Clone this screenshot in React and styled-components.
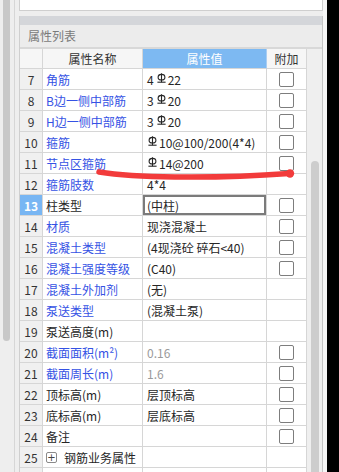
import React from "react";
import styled, { createGlobalStyle } from "styled-components";

const Global = createGlobalStyle`
  html, body { margin: 0; padding: 0; background: #eeeeee; }
  body { font-family: "Noto Sans CJK SC", "Noto Sans", sans-serif; }
`;

const Screen = styled.div`
  position: relative;
  width: 339px;
  height: 472px;
  overflow: hidden;
  display: flex;
  background: #eeeeee;
  font-family: "Noto Sans CJK SC", "Noto Sans", sans-serif;
  font-size: 12px;
`;

const LeftRail = styled.div`
  flex: none;
  border-right: 1px solid #d6d6d6;
  padding-left: 3px;
  width: 11px;
`;

const RailThumb = styled.div`
  width: 7px;
  height: 341px;
  background: #c8c8c8;
  border-radius: 0 0 4px 4px;
`;

const Main = styled.div`
  width: 304px;
  flex: none;
  padding-left: 4px;
  display: flex;
  flex-direction: column;
`;

const TopBox = styled.div`
  height: 11px;
  box-sizing: border-box;
  background: #ffffff;
  border: 1px solid #cfcfcf;
  border-top: none;
  flex: none;
`;

const Panel = styled.div`
  margin-top: 5px;
  flex: 1;
  display: flex;
  flex-direction: column;
  border-left: 1px solid #cfcfcf;
  border-right: 1px solid #c4c4c4;
  background: #efefef;
  min-height: 0;
`;

const PanelBar = styled.div`
  height: 9px;
  background: #d4d6da;
  flex: none;
`;

const PanelTitle = styled.div`
  height: 22px;
  line-height: 22px;
  padding-left: 8px;
  color: #7a7a7a;
  font-size: 12px;
  background: #ececec;
  border-bottom: 2px solid #d8d8d8;
  flex: none;
`;

const PanelBody = styled.div`
  display: flex;
  flex: 1;
  min-height: 0;
`;

const Table = styled.div`
  width: 287px;
  flex: none;
  display: flex;
  flex-direction: column;
`;

const Row = styled.div`
  display: grid;
  grid-template-columns: 23px 100px 124px 40px;
  height: ${(p) => (p.$header ? 20 : 21)}px;
  flex: none;
`;

const Cell = styled.div`
  box-sizing: border-box;
  border-right: 1px solid #d6d6d6;
  border-bottom: 1px solid #d6d6d6;
  display: flex;
  align-items: center;
  white-space: nowrap;
  overflow: hidden;
  font-size: 12px;
  line-height: 20px;
  padding-top: 1px;
`;

const NumCell = styled(Cell)`
  justify-content: center;
  background: ${(p) => (p.$active ? "#78b6f3" : "#f0f0f0")};
  color: ${(p) => (p.$active ? "#ffffff" : "#333333")};
  font-weight: ${(p) => (p.$active ? 700 : 400)};
`;

const HeadCell = styled(Cell)`
  justify-content: center;
  background: ${(p) => (p.$selected ? "#7db9f2" : "#f6f6f6")};
  color: ${(p) => (p.$selected ? "#ffffff" : "#333333")};
  border-right-color: ${(p) => (p.$selected ? "#a9cdf2" : "#d6d6d6")};
`;

const NameCell = styled(Cell)`
  padding-left: 3px;
  background: #ffffff;
  color: ${(p) => (p.$blue ? "#3552e4" : "#262626")};
  gap: 7px;
`;

const ValueCell = styled(Cell)`
  padding-left: 4px;
  background: #ffffff;
  color: ${(p) => (p.$muted ? "#9a9a9a" : "#262626")};
  box-shadow: ${(p) => (p.$focused ? "inset 0 0 0 2px #7b7b7b" : "none")};
`;

const ExtraCell = styled(Cell)`
  justify-content: center;
  background: #ffffff;
`;

const Check = styled.span`
  width: 13px;
  height: 13px;
  border: 1px solid #7d7d7d;
  border-radius: 2px;
  background: #ffffff;
  margin-top: -1px;
`;

const Expander = styled.span`
  width: 9px;
  height: 9px;
  border: 1px solid #8a8a8a;
  border-radius: 2px;
  display: inline-flex;
  align-items: center;
  justify-content: center;
  color: #444;
  font-size: 10px;
  line-height: 1;
  font-family: "DejaVu Sans", sans-serif;
`;

const Steel = styled.svg`
  width: 9px;
  height: 10px;
  margin: -3px 2px 0 ${(p) => (p.$lead ? 1 : 3)}px;
  flex: none;
`;

const ScrollTrack = styled.div`
  flex: 1;
  padding: 112px 0 0 4px;
  box-sizing: border-box;
`;

const ScrollThumb = styled.div`
  width: 8px;
  height: 100%;
  background: #cdcdcd;
  border-radius: 4px 4px 0 0;
`;

const Edge = styled.div`
  width: 4px;
  flex: none;
  background: #f6f6f6;
`;

const Black = styled.div`
  flex: 1;
  background: #000000;
`;

const Annotation = styled.svg`
  position: absolute;
  left: 0;
  top: 0;
  width: 339px;
  height: 472px;
  pointer-events: none;
`;

const SteelMark = ({ lead }) => (
  <Steel $lead={lead} viewBox="0 0 9 10">
    <ellipse cx="4.5" cy="4.2" rx="3.4" ry="2.8" fill="none" stroke="currentColor" strokeWidth="1.1" />
    <line x1="4.5" y1="0.3" x2="4.5" y2="9.2" stroke="currentColor" strokeWidth="1.1" />
    <line x1="0.4" y1="9.2" x2="8.6" y2="9.2" stroke="currentColor" strokeWidth="1.1" />
  </Steel>
);

const renderValue = (v) => {
  const parts = v.split("§");
  const out = [];
  parts.forEach((p, i) => {
    if (i > 0) out.push(<SteelMark key={"s" + i} lead={i === 1 && parts[0] === ""} />);
    if (p) out.push(<span key={"t" + i}>{p}</span>);
  });
  return out;
};

const rows = [
  { n: 7, name: "角筋", blue: true, value: "4§22", cb: true },
  { n: 8, name: "B边一侧中部筋", blue: true, value: "3§20", cb: true },
  { n: 9, name: "H边一侧中部筋", blue: true, value: "3§20", cb: true },
  { n: 10, name: "箍筋", blue: true, value: "§10@100/200(4*4)", cb: true },
  { n: 11, name: "节点区箍筋", blue: true, value: "§14@200", cb: true },
  { n: 12, name: "箍筋肢数", blue: true, value: "4*4", cb: false },
  { n: 13, name: "柱类型", blue: false, value: "(中柱)", cb: true, active: true },
  { n: 14, name: "材质", blue: true, value: "现浇混凝土", cb: true },
  { n: 15, name: "混凝土类型", blue: true, value: "(4现浇砼 碎石<40)", cb: true },
  { n: 16, name: "混凝土强度等级", blue: true, value: "(C40)", cb: true },
  { n: 17, name: "混凝土外加剂", blue: true, value: "(无)", cb: false },
  { n: 18, name: "泵送类型", blue: true, value: "(混凝土泵)", cb: false },
  { n: 19, name: "泵送高度(m)", blue: false, value: "", cb: false },
  { n: 20, name: "截面面积(m²)", blue: true, value: "0.16", cb: true, muted: true },
  { n: 21, name: "截面周长(m)", blue: true, value: "1.6", cb: true, muted: true },
  { n: 22, name: "顶标高(m)", blue: false, value: "层顶标高", cb: true },
  { n: 23, name: "底标高(m)", blue: false, value: "层底标高", cb: true },
  { n: 24, name: "备注", blue: false, value: "", cb: true },
  { n: 25, name: "钢筋业务属性", blue: false, value: "", cb: false, group: true },
  { n: 26, name: "", blue: false, value: "", cb: false, hidden: true },
];

export default function App() {
  return (
    <>
      <Global />
      <Screen>
        <LeftRail>
          <RailThumb />
        </LeftRail>
        <Main>
          <TopBox />
          <Panel>
            <PanelBar />
            <PanelTitle>属性列表</PanelTitle>
            <PanelBody>
              <Table>
                <Row $header>
                  <NumCell as={HeadCell} />
                  <HeadCell>属性名称</HeadCell>
                  <HeadCell $selected>属性值</HeadCell>
                  <HeadCell>附加</HeadCell>
                </Row>
                {rows.map((r) => (
                  <Row key={r.n}>
                    <NumCell $active={r.active}>{r.hidden ? "" : r.n}</NumCell>
                    <NameCell $blue={r.blue}>
                      {r.group && <Expander>+</Expander>}
                      {r.name}
                    </NameCell>
                    <ValueCell $muted={r.muted} $focused={r.active}>
                      {renderValue(r.value)}
                    </ValueCell>
                    <ExtraCell>{r.cb && <Check />}</ExtraCell>
                  </Row>
                ))}
              </Table>
              <ScrollTrack>
                <ScrollThumb />
              </ScrollTrack>
            </PanelBody>
          </Panel>
        </Main>
        <Edge />
        <Black />
        <Annotation viewBox="0 0 339 472">
          <path
            d="M99 172 C 115 174.5, 140 176.5, 175 177 C 215 177.5, 255 176, 289 173.5"
            fill="none"
            stroke="#f23b3b"
            strokeWidth="5.5"
            strokeLinecap="round"
          />
          <circle cx="290" cy="173.5" r="4.2" fill="#f23b3b" />
        </Annotation>
      </Screen>
    </>
  );
}
